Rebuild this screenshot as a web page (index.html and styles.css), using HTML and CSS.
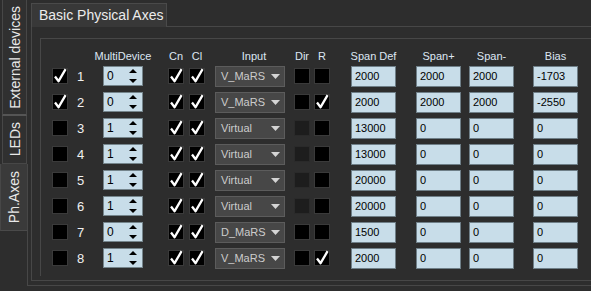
FILE: index.html
```html
<!DOCTYPE html>
<html lang="en">
<head>
    <meta charset="UTF-8">
    <title>Basic Physical Axes</title>
    <link rel="stylesheet" href="styles.css">
</head>
<body>
    <div class="window">
        <div class="side-tabs">
            <div class="side-tab tab-ext"><span>External devices</span></div>
            <div class="side-tab tab-leds"><span>LEDs</span></div>
            <div class="side-tab active"><span>Ph.Axes</span></div>
            <div class="side-fill"></div>
        </div>
        <div class="outer-pane">
            <div class="tab-widget">
                <div class="tab-bar">
                    <div class="tab">Basic Physical Axes</div>
                    <div class="tab-rest"></div>
                </div>
                <div class="tab-pane">
                    <div class="group">
                        <div class="axes" id="axes">
                            <div></div>
                            <div></div>
                            <div class="head w-spin">MultiDevice</div>
                            <div class="head w-box">Cn</div>
                            <div class="head w-box">Cl</div>
                            <div class="head w-combo head-input">Input</div>
                            <div class="head w-box">Dir</div>
                            <div class="head w-box">R</div>
                            <div class="head w-field">Span Def</div>
                            <div class="head w-field">Span+</div>
                            <div class="head w-field">Span-</div>
                            <div class="head w-field">Bias</div>
                        </div>
                    </div>
                </div>
            </div>
        </div>
    </div>
    <script>
        const axes = [
            { on: true,  multi: 0, input: 'V_MaRS',  dir: 'off',  r: false, def: 2000,  plus: 2000, minus: 2000, bias: -1703 },
            { on: true,  multi: 0, input: 'V_MaRS',  dir: 'off',  r: true,  def: 2000,  plus: 2000, minus: 2000, bias: -2550 },
            { on: false, multi: 1, input: 'Virtual', dir: 'dis',  r: false, def: 13000, plus: 0, minus: 0, bias: 0 },
            { on: false, multi: 1, input: 'Virtual', dir: 'dis',  r: false, def: 13000, plus: 0, minus: 0, bias: 0 },
            { on: false, multi: 1, input: 'Virtual', dir: 'dis',  r: false, def: 20000, plus: 0, minus: 0, bias: 0 },
            { on: false, multi: 1, input: 'Virtual', dir: 'dis',  r: false, def: 20000, plus: 0, minus: 0, bias: 0 },
            { on: false, multi: 0, input: 'D_MaRS',  dir: 'off',  r: false, def: 1500,  plus: 0, minus: 0, bias: 0 },
            { on: false, multi: 1, input: 'V_MaRS',  dir: 'off',  r: true,  def: 2000,  plus: 0, minus: 0, bias: 0 }
        ];

        const tick = '<svg width="16" height="16" viewBox="0 0 16 16"><path d="M3 8.5 L6.6 13.2 L13.6 1.2" fill="none" stroke="#fff" stroke-width="2.3" stroke-linejoin="round"/></svg>';

        function checkBox(checked, disabled) {
            const cls = disabled ? 'check disabled' : 'check';
            return '<div><div class="' + cls + '">' + (checked ? tick : '') + '</div></div>';
        }

        function field(value) {
            return '<div><div class="field">' + value + '</div></div>';
        }

        const grid = document.getElementById('axes');
        let html = '';

        axes.forEach((axis, index) => {
            html += checkBox(axis.on, false);
            html += '<div class="num">' + (index + 1) + '</div>';
            html += '<div><div class="spin"><span>' + axis.multi + '</span>' +
                '<svg width="8" height="14" viewBox="0 0 8 14"><path d="M0 4 L4 0 L8 4 Z M0 10 L8 10 L4 14 Z" fill="#000"/></svg></div></div>';
            html += checkBox(true, false);
            html += checkBox(true, false);
            html += '<div><div class="combo"><span>' + axis.input + '</span>' +
                '<svg width="9" height="5" viewBox="0 0 9 5"><path d="M0 0 L9 0 L4.5 5 Z" fill="#d4d4d4"/></svg></div></div>';
            html += checkBox(false, axis.dir === 'dis');
            html += checkBox(axis.r, false);
            html += field(axis.def);
            html += field(axis.plus);
            html += field(axis.minus);
            html += field(axis.bias);
        });

        grid.insertAdjacentHTML('beforeend', html);
    </script>
</body>
</html>
```

FILE: styles.css
```css
body {
    margin: 0;
    width: 591px;
    height: 291px;
    overflow: hidden;
    background-color: #2d2d2d;
    font-family: 'Liberation Sans', Arial, sans-serif;
    color: #e6e6e6;
}

.window {
    display: flex;
    height: 291px;
}

/* left vertical tabs */
.side-tabs {
    width: 28px;
    flex: none;
    display: flex;
    flex-direction: column;
}

.side-tab {
    margin-left: 2px;
    width: 23px;
    border-left: 1px solid #474747;
    border-right: 1px solid #474747;
    background-color: #303030;
    display: flex;
    align-items: center;
    justify-content: center;
    font-size: 14px;
    color: #e8e8e8;
}

.side-tab span {
    writing-mode: vertical-rl;
    transform: rotate(180deg);
    white-space: nowrap;
}

.tab-ext {
    height: 114px;
    border-bottom: 2px solid #555;
}

.tab-leds {
    height: 47px;
    border-bottom: 1px solid #474747;
}

.side-tab.active {
    margin-left: 0;
    width: 26px;
    height: 66px;
    background-color: #3a3a3a;
    border-bottom: 1px solid #4a4a4a;
}

.side-fill {
    flex: 1;
    margin-bottom: 5px;
    border-right: 1px solid #474747;
}

/* outer pane */
.outer-pane {
    flex: 1;
    min-width: 0;
    height: 286px;
    box-sizing: border-box;
    border-bottom: 1px solid #474747;
    padding: 3px 0 4px 3px;
    overflow: hidden;
}

.tab-widget {
    display: flex;
    flex-direction: column;
    height: 100%;
}

.tab-bar {
    display: flex;
    height: 24px;
    flex: none;
}

.tab {
    width: 127px;
    border: 1px solid #4a4a4a;
    border-bottom: none;
    background-color: #383838;
    padding-left: 7px;
    font-size: 14px;
    line-height: 22px;
    color: #ececec;
    white-space: nowrap;
}

.tab-rest {
    flex: 1;
    border-bottom: 1px solid #474747;
}

.tab-pane {
    flex: 1;
    border-left: 1px solid #474747;
    border-bottom: 1px solid #474747;
    padding: 11px 0 4px 8px;
    overflow: hidden;
}

.group {
    height: 100%;
    box-sizing: border-box;
    border-top: 1px solid #474747;
    border-left: 1px solid #474747;
    padding: 4px 0 0 11px;
}

/* axes table */
.axes {
    display: grid;
    grid-template-columns: 25px 26px 65px 21px 26px 79px 20px 37px 65px 53px 64px 46px;
    grid-template-rows: 20px;
    grid-auto-rows: 26px;
    align-items: center;
}

.head {
    align-self: end;
    display: flex;
    justify-content: center;
    font-size: 11px;
    line-height: 13px;
    color: #dde7f3;
    white-space: nowrap;
}

.head-input {
    padding-left: 8px;
    box-sizing: border-box;
}

.w-box { width: 16px; }
.w-spin { width: 40px; }
.w-combo { width: 70px; }
.w-field { width: 45px; }

.check {
    width: 14px;
    height: 14px;
    border: 1px solid #3a3a3a;
    background-color: #000;
}

.check svg {
    display: block;
    margin: -1px 0 0 -1px;
    overflow: visible;
}

.check.disabled {
    background-color: #1d1d1d;
    border-color: #2a2a2a;
}

.num {
    font-size: 13px;
    color: #f0f0f0;
}

.spin {
    width: 38px;
    height: 18px;
    border: 1px solid #75858c;
    background-color: #c8dde9;
    display: flex;
    align-items: center;
    justify-content: space-between;
    padding: 0 5px 0 0;
    box-sizing: content-box;
    width: 33px;
    font-size: 12px;
    color: #000;
}

.spin span {
    padding-left: 3px;
}

.combo {
    width: 63px;
    height: 19px;
    border: 1px solid #5c5c5c;
    background-color: #474747;
    display: flex;
    align-items: center;
    justify-content: space-between;
    padding: 0 4px 0 5px;
    box-sizing: content-box;
    width: 59px;
    font-size: 11px;
    color: #cccccc;
}

.field {
    width: 40px;
    height: 19px;
    border: 1px solid #6f7f88;
    background-color: #c8dde9;
    padding-left: 3px;
    font-size: 11px;
    line-height: 19px;
    color: #000;
}
```
